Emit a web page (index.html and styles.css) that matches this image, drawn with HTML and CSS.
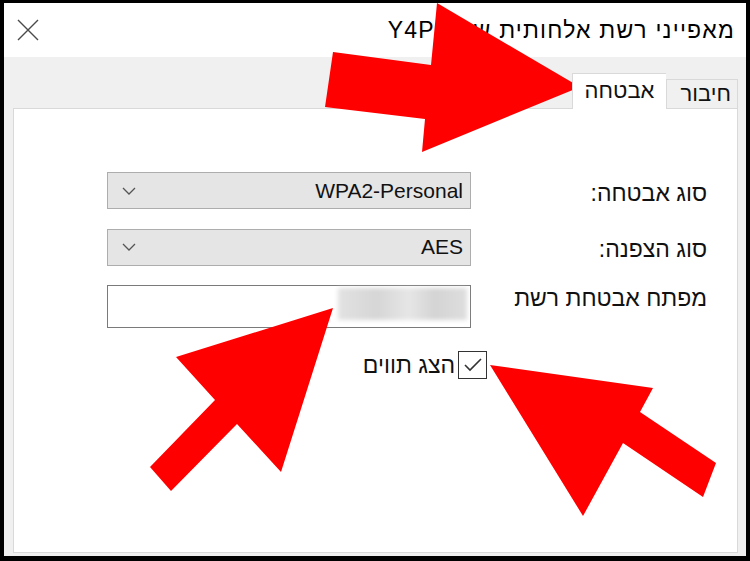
FILE: index.html
```html
<!DOCTYPE html>
<html lang="he">
<head>
    <meta charset="UTF-8">
    <meta name="viewport" content="width=device-width, initial-scale=1.0">
    <title>מאפייני רשת אלחותית</title>
    <link rel="stylesheet" href="styles.css">
</head>
<body>

    <div class="window">
        <div class="titlebar">
            <svg class="close-icon" width="22" height="22" viewBox="0 0 22 22">
                <path d="M1 1L21 21M21 1L1 21" stroke="#4a4a4a" stroke-width="1.4" fill="none"/>
            </svg>
            <div class="title">מאפייני רשת אלחותית של Y4PC</div>
        </div>

        <div class="window-body">
            <div class="tabs">
                <div class="tab">חיבור</div>
                <div class="tab active">אבטחה</div>
            </div>

            <div class="panel">
                <div class="form">
                    <div class="form-label">סוג אבטחה:</div>
                    <div class="select">
                        <span>WPA2-Personal</span>
                        <svg class="chevron" width="14" height="8" viewBox="0 0 14 8">
                            <path d="M1 1L7 7L13 1" stroke="#555" stroke-width="1.3" fill="none"/>
                        </svg>
                    </div>

                    <div class="form-label">סוג הצפנה:</div>
                    <div class="select">
                        <span>AES</span>
                        <svg class="chevron" width="14" height="8" viewBox="0 0 14 8">
                            <path d="M1 1L7 7L13 1" stroke="#555" stroke-width="1.3" fill="none"/>
                        </svg>
                    </div>

                    <div class="form-label top">מפתח אבטחת רשת</div>
                    <div class="textbox">
                        <span class="hidden-key"></span>
                    </div>
                </div>

                <div class="check-row">
                    <div class="checkbox">
                        <svg width="20" height="16" viewBox="0 0 20 16">
                            <path d="M2 8L7 13L18 2" stroke="#333" stroke-width="1.6" fill="none"/>
                        </svg>
                    </div>
                    <span class="check-label">הצג תווים</span>
                </div>
            </div>
        </div>
    </div>

    <!-- החיצים האדומים מעל צילום המסך -->
    <svg class="arrows" width="750" height="561" viewBox="0 0 750 561">
        <polygon points="333,52 431,65 437,3 580,87 422,152 425,119 325,107"/>
        <polygon points="150,467 215,400 176,357 333,308 281,472 237,424 171,491"/>
        <polygon points="716,463 640,412 653,388 490,365 583,516 623,443 703,497"/>
    </svg>

</body>
</html>
```

FILE: styles.css
```css
body {
    margin: 0;
    padding: 3px 4px 5px 4px;
    background-color: #000;
    font-family: 'Liberation Sans', 'DejaVu Sans', sans-serif;
    color: #111;
    position: relative;
    width: 742px;
    height: 553px;
}

.window {
    height: 553px;
    display: flex;
    flex-direction: column;
    background-color: #f0f0f0;
}

.titlebar {
    height: 54px;
    background-color: #fff;
    display: flex;
    align-items: center;
    justify-content: space-between;
    padding: 0 11px 0 13px;
}

.close-icon {
    display: block;
}

.title {
    font-size: 23px;
    letter-spacing: 1.2px;
    direction: rtl;
    color: #000;
}

.window-body {
    flex: 1;
    direction: rtl;
    display: flex;
    flex-direction: column;
    padding: 0 8px 3px 9px;
}

.tabs {
    height: 51px;
    display: flex;
    align-items: flex-end;
}

.tab {
    height: 29px;
    padding: 0 6px;
    font-size: 22px;
    line-height: 28px;
    border: 1px solid #d9d9d9;
    border-bottom: none;
    background-color: #f0f0f0;
    box-sizing: border-box;
    width: 72px;
}

.tab.active {
    width: 94px;
    height: 36px;
    line-height: 34px;
    margin-bottom: -1px;
    background-color: #fff;
    border-right: none;
    text-align: center;
    position: relative;
    z-index: 1;
}

.panel {
    flex: 1;
    background-color: #fff;
    border: 1px solid #d9d9d9;
    padding: 63px 30px 0 0;
}

.form {
    display: grid;
    grid-template-columns: 206px 364px;
    column-gap: 30px;
    row-gap: 19.5px;
}

.form-label {
    font-size: 23px;
    line-height: 26px;
    align-self: center;
    padding-top: 4px;
}

.form-label.top {
    align-self: start;
    padding-top: 0;
}

.select {
    height: 37px;
    box-sizing: border-box;
    background-color: #e5e5e5;
    border: 1px solid #adadad;
    display: flex;
    align-items: center;
    justify-content: space-between;
    padding: 0 7px 0 14px;
    font-size: 21px;
    direction: ltr;
    flex-direction: row-reverse;
}

.chevron {
    display: block;
}

.textbox {
    height: 43px;
    box-sizing: border-box;
    border: 1px solid #7a7a7a;
    padding: 2px 3px;
}

.hidden-key {
    display: block;
    width: 129px;
    height: 32px;
    background: linear-gradient(90deg, #e2e2e2 0%, #d6d6d6 30%, #e6e6e6 55%, #d4d4d4 75%, #dedede 100%);
    filter: blur(2px);
}

.check-row {
    display: flex;
    align-items: center;
    gap: 3px;
    margin: 23px 220px 0 0;
}

.checkbox {
    width: 29px;
    height: 28px;
    box-sizing: border-box;
    border: 1px solid #333;
    display: flex;
    align-items: center;
    justify-content: center;
}

.check-label {
    font-size: 23px;
}

.arrows {
    position: absolute;
    left: 0;
    top: 0;
    fill: #f00;
    pointer-events: none;
}
```
